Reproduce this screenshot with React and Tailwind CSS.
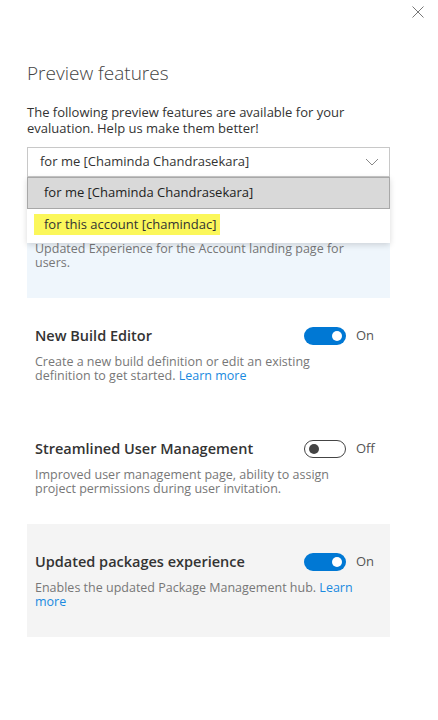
import React from "react";

function Toggle({ on }) {
  return (
    <div className="flex items-center gap-[10px]">
      {on ? (
        <div className="w-[42px] h-[18px] rounded-full bg-[#0078d4] flex items-center justify-end pr-[4px]">
          <div className="w-[10px] h-[10px] rounded-full bg-white" />
        </div>
      ) : (
        <div className="w-[42px] h-[18px] rounded-full border border-[#444] bg-white flex items-center pl-[4px]">
          <div className="w-[10px] h-[10px] rounded-full bg-[#444]" />
        </div>
      )}
      <span className="text-[13px] text-[#555] w-[26px]">{on ? "On" : "Off"}</span>
    </div>
  );
}

function Feature({ title, desc, link, on, bg }) {
  return (
    <div className={`h-[113px] px-[8px] pt-[28px] ${bg || ""}`}>
      <div className="flex items-center justify-between h-[20px]">
        <span className="text-[14.5px] font-semibold text-[#333]">{title}</span>
        <Toggle on={on} />
      </div>
      <p className="mt-[9px] text-[12.5px] leading-[14px] text-[#777] pr-[16px]">
        {desc}
        {link && <span className="text-[#1a8ae0]"> Learn more</span>}
      </p>
    </div>
  );
}

export default function App() {
  return (
    <div className="w-[438px] h-[720px] bg-white font-['Open_Sans',sans-serif] text-[#333] overflow-hidden">
      <div className="flex justify-end pr-[14px] pt-[6px] h-[24px]">
        <svg width="12" height="12" viewBox="0 0 12 12" stroke="#777" strokeWidth="1">
          <path d="M0.5 0.5 L11.5 11.5 M11.5 0.5 L0.5 11.5" />
        </svg>
      </div>
      <div className="px-[27px] w-[363px] box-content">
        <h1 className="mt-[36px] text-[19px] font-light text-[#444] leading-[26px]">Preview features</h1>
        <p className="mt-[18px] w-[330px] text-[13px] leading-[16px] text-[#333]">
          The following preview features are available for your evaluation. Help us make them better!
        </p>
        <div className="relative mt-[11px] w-[363px]">
          <div className="h-[30px] border border-[#c8c8c8] bg-white flex items-center justify-between pl-[12px] pr-[10px]">
            <span className="text-[13px] text-[#333]">for me [Chaminda Chandrasekara]</span>
            <svg width="14" height="8" viewBox="0 0 14 8" fill="none" stroke="#888" strokeWidth="1">
              <path d="M1 1 L7 7 L13 1" />
            </svg>
          </div>
          <div className="absolute left-0 top-full w-[363px] bg-white shadow-[0_2px_6px_rgba(0,0,0,0.15)] z-10 pb-[3px]">
            <div className="h-[32px] bg-[#d9d9d9] border border-[#a8a8a8] flex items-center pl-[16px]">
              <span className="text-[13px] text-[#222]">for me [Chaminda Chandrasekara]</span>
            </div>
            <div className="h-[31px] flex items-center pl-[7px]">
              <span className="bg-[#fbf75a] h-[21px] w-[186px] flex items-center pl-[10px] text-[13px] text-[#333]">
                for this account [chamindac]
              </span>
            </div>
          </div>
        </div>
        <div className="mt-[8px] w-[363px]">
          <Feature
            title="New Account Landing Page"
            desc="Updated Experience for the Account landing page for users."
            on={false}
            bg="bg-[#eff6fc]"
          />
          <Feature
            title="New Build Editor"
            desc="Create a new build definition or edit an existing definition to get started."
            link
            on={true}
          />
          <Feature
            title="Streamlined User Management"
            desc="Improved user management page, ability to assign project permissions during user invitation."
            on={false}
          />
          <Feature
            title="Updated packages experience"
            desc="Enables the updated Package Management hub."
            link
            on={true}
            bg="bg-[#f4f4f4]"
          />
        </div>
      </div>
    </div>
  );
}
